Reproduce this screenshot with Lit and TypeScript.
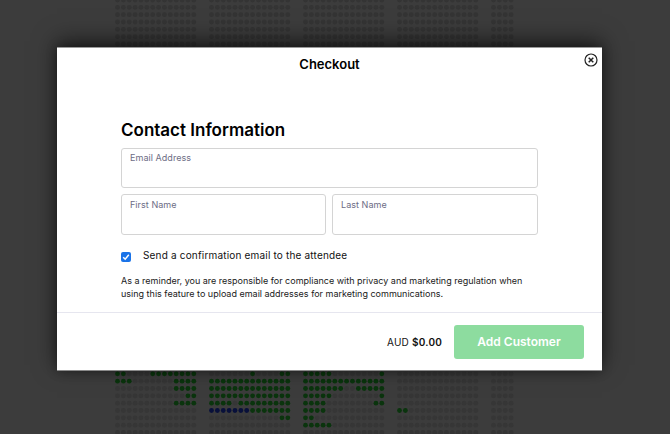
import { LitElement, html, css, svg } from "lit";
import { customElement } from "lit/decorators.js";

const BLOCKS = [14, 14, 14, 14, 4];
const ROWS = 60;
type Range = [number, number, string?];
// green (or navy) runs per block, keyed by row index counted from row 51
const RUNS: Range[][][] = [
  [[[0, 1], [6, 13]], [[0, 2], [10, 13]], [[10, 13]], [[12, 13]], [[10, 13]], [], [], []],
  [[[7, 7], [12, 13]], [[0, 13]], [[0, 13]], [[0, 13]], [[0, 3], [5, 13]], [[0, 6, "n"], [7, 13]], [[12, 13]], []],
  [[[0, 4], [13, 13]], [[0, 13]], [[0, 6], [9, 13]], [[0, 4], [13, 13]], [[0, 3], [12, 13]], [[0, 3]], [[0, 1]], [[0, 4]]],
  [[], [], [], [], [], [[0, 1]], [], []],
  [[], [], [], [], [], [], [], []],
];

function dotColor(b: number, c: number, r: number): string {
  const row = r - 51;
  if (row < 0 || row > 7) return "#343434";
  for (const [a, z, k] of RUNS[b][row]) {
    if (c >= a && c <= z) return k ? "#08103a" : "#0a340d";
  }
  return "#363636";
}

@customElement("app-root")
export class AppRoot extends LitElement {
  static styles = css`
    :host {
      display: block;
      width: 670px;
      height: 434px;
      font-family: Inter, "Liberation Sans", sans-serif;
    }
    .page {
      position: relative;
      width: 670px;
      height: 434px;
      overflow: hidden;
      background: #3c3c3c;
      display: flex;
      align-items: flex-start;
      padding: 47px 0 0 57px;
      box-sizing: border-box;
    }
    .dots {
      position: absolute;
      inset: 0;
      width: 670px;
      height: 434px;
    }
    .modal {
      position: relative;
      width: 545px;
      height: 324px;
      box-sizing: border-box;
      background: #fff;
      border-top: 1px solid #9a9a9a;
      border-bottom: 1px solid #8a8a8a;
      box-shadow: 0 -6px 22px rgba(0, 0, 0, 0.55), 0 0 10px rgba(0, 0, 0, 0.3);
      display: flex;
      flex-direction: column;
    }
    .head {
      text-align: center;
      font-size: 13px;
      line-height: 17px;
      font-weight: 600;
      color: #000;
      padding-top: 8px;
    }
    .close {
      position: absolute;
      top: 5px;
      right: 4px;
      width: 14px;
      height: 14px;
      display: block;
    }
    .body {
      flex: 1;
      padding: 46px 64px 0;
      display: flex;
      flex-direction: column;
    }
    h2 {
      margin: 0 0 7px;
      font-size: 17px;
      line-height: 22px;
      font-weight: 600;
      color: #000;
    }
    .fields {
      display: grid;
      grid-template-columns: 205px 206px;
      grid-template-rows: 40px 41px;
      column-gap: 6px;
      row-gap: 6px;
    }
    .field {
      box-sizing: border-box;
      border: 1px solid #d4d4d4;
      border-radius: 3px;
      padding: 4px 8px 0;
      display: flex;
      flex-direction: column;
      background: #fff;
    }
    .wide {
      grid-column: 1 / 3;
      padding-top: 3px;
    }
    .field label {
      font-size: 9px;
      line-height: 12px;
      letter-spacing: 0.05px;
      color: #6d6d85;
    }
    .field input {
      border: none;
      outline: none;
      padding: 0;
      background: transparent;
      min-height: 0;
      flex: 1;
    }
    .check {
      display: flex;
      align-items: center;
      margin-top: 13px;
      font-size: 10px;
      line-height: 14px;
      color: #111;
      letter-spacing: 0.18px;
    }
    .box {
      box-sizing: border-box;
      width: 10px;
      height: 10px;
      margin: 3px 12px 0 0;
      border-radius: 2px;
      background: #1a73e8;
      display: flex;
      align-items: center;
      justify-content: center;
    }
    .box svg {
      width: 8px;
      height: 8px;
    }
    .note {
      margin: 12px 0 0;
      font-size: 9px;
      line-height: 13px;
      color: #1a1a1a;
    }
    .foot {
      height: 58px;
      box-sizing: border-box;
      border-top: 1px solid #e6e6ef;
      display: flex;
      align-items: center;
      justify-content: flex-end;
      padding: 0 18px 0 0;
      gap: 12px;
    }
    .total {
      font-size: 10px;
      letter-spacing: 0.2px;
      color: #111;
    }
    .total b {
      font-weight: 600;
    }
    button {
      width: 130px;
      height: 34px;
      border: none;
      border-radius: 3px;
      background: #8ddc9f;
      color: #fff;
      font: 600 12px Inter, "Liberation Sans", sans-serif;
      padding: 0;
    }
  `;

  private renderDots() {
    const circles = [];
    for (let b = 0; b < BLOCKS.length; b++) {
      for (let c = 0; c < BLOCKS[b]; c++) {
        for (let r = 0; r < ROWS; r++) {
          const cx = 117.5 + 94 * b + c * 5.87;
          const cy = r * 7.33;
          circles.push(
            svg`<circle cx=${cx} cy=${cy} r="2.4" fill=${dotColor(b, c, r)}></circle>`
          );
        }
      }
    }
    return html`<svg class="dots" viewBox="0 0 670 434">${circles}</svg>`;
  }

  render() {
    return html`
      <div class="page">
        ${this.renderDots()}
        <div class="modal">
          <div class="head">Checkout</div>
          <svg class="close" viewBox="0 0 14 14" fill="none" stroke="#222" aria-label="Close">
            <circle cx="7" cy="7" r="6" stroke-width="1.2"></circle>
            <path d="M4.7 4.7 9.3 9.3M9.3 4.7 4.7 9.3" stroke-width="1.5"></path>
          </svg>
          <div class="body">
            <h2>Contact Information</h2>
            <div class="fields">
              <div class="field wide"><label>Email Address</label><input /></div>
              <div class="field"><label>First Name</label><input /></div>
              <div class="field"><label>Last Name</label><input /></div>
            </div>
            <div class="check">
              <span class="box">
                <svg viewBox="0 0 8 8" fill="none" stroke="#fff" stroke-width="1.5">
                  <path d="M1.2 4.2 3.2 6.2 6.8 1.8"></path>
                </svg>
              </span>
              Send a confirmation email to the attendee
            </div>
            <p class="note">
              As a reminder, you are responsible for compliance with privacy and marketing regulation when
              using this feature to upload email addresses for marketing communications.
            </p>
          </div>
          <div class="foot">
            <span class="total">AUD <b>$0.00</b></span>
            <button>Add Customer</button>
          </div>
        </div>
      </div>
    `;
  }
}
